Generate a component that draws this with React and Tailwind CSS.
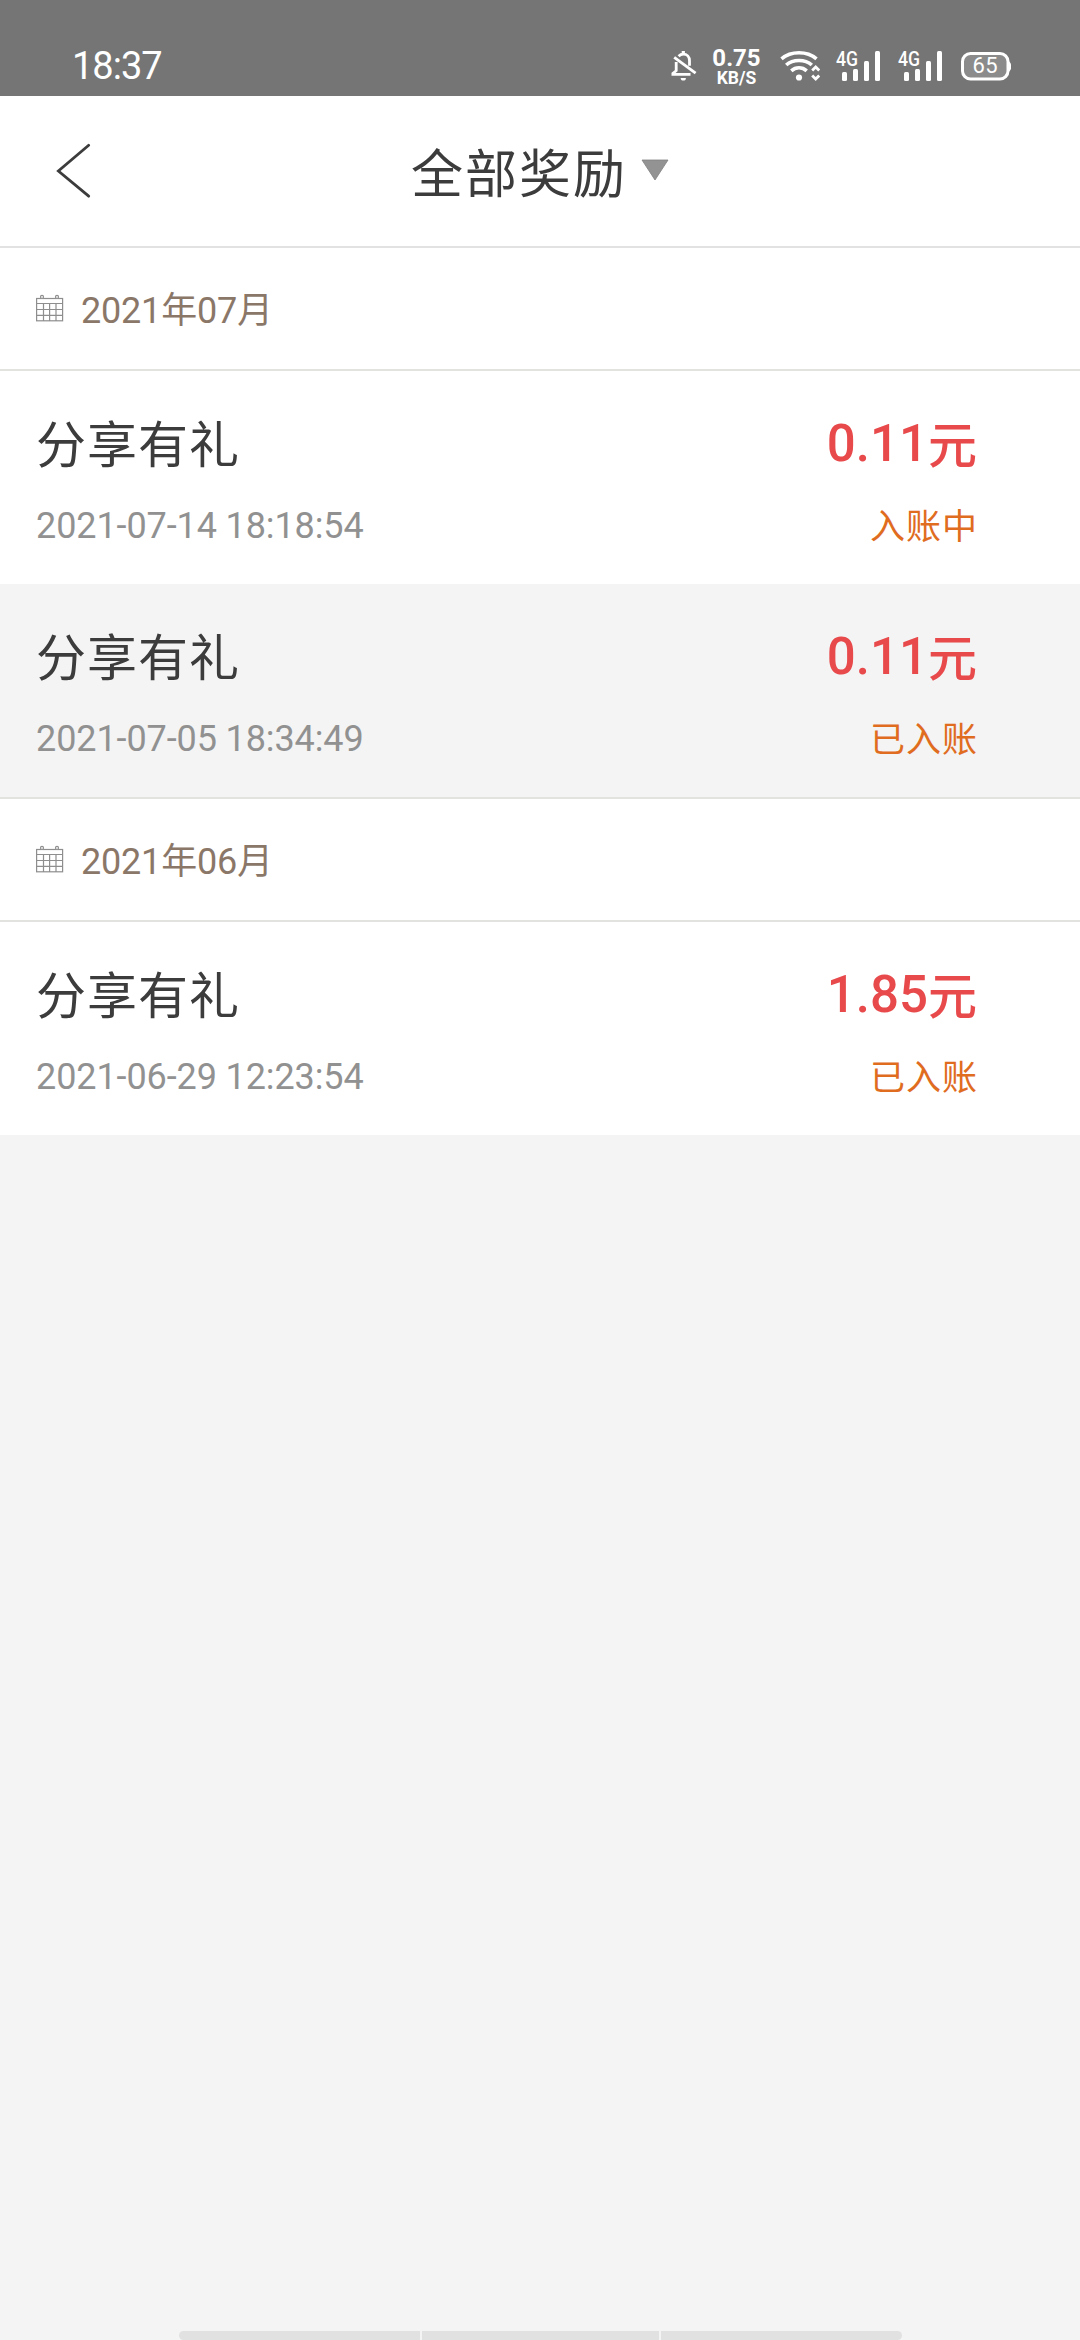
const groups = [
  {
    month: "2021年07月",
    items: [
      { time: "2021-07-14 18:18:54", amount: "0.11", status: "入账中" },
      { time: "2021-07-05 18:34:49", amount: "0.11", status: "已入账" },
    ],
  },
  {
    month: "2021年06月",
    items: [{ time: "2021-06-29 12:23:54", amount: "1.85", status: "已入账" }],
  },
];

function MutedBell() {
  return (
    <svg className="h-[32px] w-[28px]" viewBox="0 0 28 32" fill="none" stroke="#fff" strokeWidth="2.8">
      <path d="M7.600 6.200C8.900 4.900 10.400 4.200 12.300 4.200c3.600 0 6.200 2.700 6.200 6.600v5" />
      <path d="M12.300 4.200V1" strokeWidth="3.200" />
      <path d="M5.200 12v8.700l-3.300 2.800v.9h17.600" />
      <path d="M3.200 7.300L24.600 23.200" />
      <path d="M9.700 28h5.200a2.600 2.600 0 0 1-5.200 0z" fill="#fff" stroke="none" />
    </svg>
  );
}

function Wifi() {
  return (
    <svg className="h-[32px] w-[40px]" viewBox="0 0 40 32" fill="none" stroke="#fff" strokeWidth="3.6">
      <path d="M1.500 8.800C11 .8 27 .8 36.500 8.800" />
      <path d="M6.200 15C13 9 25 9 31.800 15" />
      <path d="M11.300 20.800c4.500-4 10.900-4 15.400 0" />
      <circle cx="19" cy="27.500" r="3.100" fill="#fff" stroke="none" />
      <path d="M32.200 20.500l3.500-3.500 3.500 3.500M32.200 25.500l3.500 3.500 3.500-3.500" strokeWidth="2.8" />
    </svg>
  );
}

function Signal() {
  return (
    <svg className="h-[32px] w-[46px] overflow-visible" viewBox="0 0 46 32" fill="#fff">
      <text x="0" y="15.500" fontSize="20" fontWeight="500" fontFamily="Roboto, sans-serif" textLength="22" lengthAdjust="spacingAndGlyphs">4G</text>
      <rect x="6" y="22" width="5" height="9" rx="1.500" />
      <rect x="17" y="19" width="5" height="12" rx="1.500" />
      <rect x="28" y="11" width="5" height="20" rx="1.500" />
      <rect x="39" y="1" width="5" height="30" rx="1.500" />
    </svg>
  );
}

function Battery() {
  return (
    <svg className="h-[29px] w-[50px]" viewBox="0 0 50 29">
      <rect x="1.500" y="1.500" width="45.500" height="25.500" rx="8" fill="#8b8b8b" stroke="#fff" strokeWidth="3" />
      <path d="M47 9c4.500 2 4.500 9 0 11z" fill="#fff" />
      <text x="11.500" y="21" fontSize="22" fill="#fff" fontFamily="Roboto, sans-serif" textLength="25">65</text>
    </svg>
  );
}

function Calendar() {
  return (
    <svg className="-mt-px h-[28px] w-[28px]" viewBox="0 0 28 28" fill="none" stroke="#8e8e8e" strokeWidth="1.200">
      <rect x="0.600" y="4.500" width="26" height="22.300" />
      <path d="M.6 9.500h26M.6 15.500h26M.6 21.300h26M7.500 9.500V27M13.600 9.500V27M20 9.500V27" />
      <circle cx="6" cy="2.900" r="1.500" fill="#fff" />
      <circle cx="21" cy="2.900" r="1.500" fill="#fff" />
    </svg>
  );
}

function StatusBar() {
  return (
    <div className="flex h-24 items-start bg-[#757575] pl-[72px] pr-[69px] pt-[50px] text-white">
      <span className="-mt-[5px] grow text-[38px] leading-[42px] tracking-[-1px]">18:37</span>
      <MutedBell />
      <div className="-mt-[4px] ml-[12.5px] flex w-[50px] flex-col items-center font-bold">
        <span className="text-[24px] leading-[24px]">0.75</span>
        <span className="text-[17.5px] leading-[17px]">KB/S</span>
      </div>
      <div className="ml-[18.5px] flex"><Wifi /></div>
      <div className="ml-[16px] flex"><Signal /></div>
      <div className="ml-[16px] flex"><Signal /></div>
      <div className="ml-[17px] mt-[2px] flex"><Battery /></div>
    </div>
  );
}

function Header() {
  return (
    <header className="flex h-[152px] items-start border-b-2 border-[#e2e2e2] bg-white">
      <svg className="ml-[54px] mt-[46px] h-[60px] w-[40px]" viewBox="0 0 40 60" fill="none" stroke="#3c3c3c" strokeWidth="2.800">
        <path d="M34.700 3.300L4.400 29l30.300 25.200" strokeLinecap="round" />
      </svg>
      <h1 className="ml-[317px] mt-10 text-[52px] leading-[80px] tracking-[2px]">全部奖励</h1>
      <svg className="ml-[14px] mt-[63px] h-[22px] w-[28px]" viewBox="0 0 28 22">
        <path d="M1 1h26L14 21z" fill="#939393" stroke="#808080" strokeWidth="0.800" />
      </svg>
    </header>
  );
}

function RewardItem({ time, amount, status, shaded }) {
  return (
    <li className={shaded ? "flex h-[213px] justify-between bg-[#f4f4f4] pl-9 pr-[102px]" : "flex h-[213px] justify-between bg-white pl-9 pr-[102px]"}>
      <div className="flex flex-col">
        <span className="mt-[38px] text-[50px] leading-[74px] tracking-[1px]">分享有礼</span>
        <span className="mt-[17px] text-[36px] leading-[52px] tracking-[-0.1px] text-[#919191]">{time}</span>
      </div>
      <div className="flex flex-col items-end">
        <div className="mt-[36px] flex items-baseline text-[51px] font-medium leading-[74px] text-[#e84a4c]">
          <span>{amount}</span>
          <span className="mr-px translate-y-[1.5px] text-[49px]">元</span>
        </div>
        <span className="mt-[19px] text-[35px] leading-[54px] tracking-[1px] text-[#e06c1f]">{status}</span>
      </div>
    </li>
  );
}

export default function App() {
  return (
    <div className="flex h-[2340px] w-[1080px] flex-col overflow-hidden bg-[#f4f4f4] font-['Roboto','Noto_Sans_CJK_SC',sans-serif] text-[#3c3c3c]">
      <StatusBar />
      <Header />
      <main className="grow">
        {groups.map((group, g) => (
          <section key={group.month}>
            <div className={g ? "flex h-[125px] items-center border-y-2 border-[#e2e2df] bg-white pl-9" : "flex h-[123px] items-center border-b-2 border-[#e2e2df] bg-white pl-9"}>
              <Calendar />
              <span className="ml-[17px] mt-1 text-[36px] leading-[52px] tracking-[-0.2px] text-[#8b7768]">{group.month}</span>
            </div>
            <ul>
              {group.items.map((item, i) => (
                <RewardItem key={item.time} shaded={i % 2 === 1} {...item} />
              ))}
            </ul>
          </section>
        ))}
      </main>
      <div className="mx-auto flex h-[9px] w-[723px] gap-[2px] overflow-hidden rounded-[5px]">
        <div className="grow bg-[#e1e1e1]" />
        <div className="w-[237px] bg-[#e1e1e1]" />
        <div className="w-[241px] bg-[#e1e1e1]" />
      </div>
    </div>
  );
}
